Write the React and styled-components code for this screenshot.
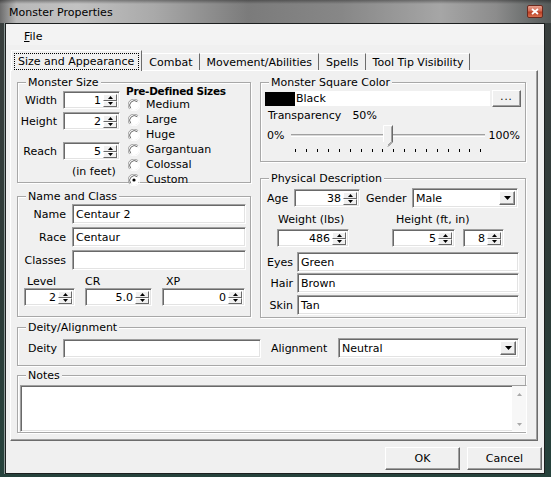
import React from 'react';
import styled, { createGlobalStyle } from 'styled-components';

const Global = createGlobalStyle`
  html, body {
    margin: 0;
    padding: 0;
    background: #2b3d3a;
  }
  body {
    font-family: "DejaVu Sans", Verdana, sans-serif;
    font-size: 11px;
    color: #000;
  }
`;

const Window = styled.div`
  width: 551px;
  height: 477px;
  box-sizing: border-box;
  display: flex;
  flex-direction: column;
  padding: 0 6px 3px 5px;
  background: linear-gradient(to bottom, #3a3f3e 0%, #2c3a37 60%, #26423c 100%);
`;

const TitleBar = styled.div`
  height: 23px;
  margin: 0 -6px 0 -5px;
  display: flex;
  align-items: flex-start;
  background:
    linear-gradient(to bottom, rgba(0,0,0,0.35) 0px, rgba(0,0,0,0) 4px),
    linear-gradient(to right, #6d6d6d 0%, #b9b9b9 3%, #c2c2c2 14%, #a9a9a9 28%, #7b7b7b 45%, #878787 62%, #a6a6a6 80%, #8c8c8c 90%, #555a59 100%);
`;

const TitleText = styled.div`
  padding: 6px 0 0 9px;
  line-height: 13px;
  font-size: 11px;
  color: #000;
`;

const CloseBox = styled.div`
  margin: 5px 8px 0 auto;
  width: 16px;
  height: 13px;
  box-sizing: border-box;
  border-radius: 2px;
  border: 1px solid #6b2a1f;
  background: linear-gradient(to bottom, #e8a08e 0%, #d46a52 45%, #b83c22 55%, #d9704f 100%);
  display: flex;
  align-items: center;
  justify-content: center;
`;

const Body = styled.div`
  flex: 1;
  display: flex;
  flex-direction: column;
  background: #f0f0f0;
  border: 1px solid #1c1f1f;
  box-shadow: -1px 0 0 #8a9694;
`;

const MenuBar = styled.div`
  height: 21px;
  display: flex;
  align-items: center;
  padding: 3px 0 0 18px;
  box-sizing: border-box;
  background: #f3f3f3;
`;

const MenuItem = styled.span`
  line-height: 13px;
  u { text-decoration: underline; }
`;

const TabStrip = styled.div`
  margin-top: 5px;
  height: 20px;
  display: flex;
  align-items: flex-end;
  padding-left: 5px;
  position: relative;
  z-index: 1;
`;

const Tab = styled.div`
  box-sizing: border-box;
  height: ${(p) => (p.$active ? 21 : 17)}px;
  margin-bottom: ${(p) => (p.$active ? -1 : 0)}px;
  padding: ${(p) => (p.$active ? '2px 2px 1px 2px' : '0 6px 0 7px')};
  display: flex;
  align-items: center;
  background: #f0f0f0;
  border-top: 1px solid #fff;
  border-left: ${(p) => (p.$active ? '1px solid #fff' : 'none')};
  border-right: 1px solid #6c6c6c;
  white-space: nowrap;
`;

const FocusRect = styled.div`
  height: 100%;
  box-sizing: border-box;
  padding: 0 4px 0 3px;
  display: flex;
  align-items: center;
  border: 1px dotted #000;
`;

const TabPage = styled.div`
  margin-left: 4px;
  width: 528px;
  height: 371px;
  box-sizing: border-box;
  border: 1px solid;
  border-color: #fff #6c6c6c #6c6c6c #fff;
  box-shadow: inset -1px -1px 0 #a0a0a0;
  padding: 11px 0 0 6px;
`;

const Columns = styled.div`
  display: grid;
  grid-template-columns: 234px 266px;
  column-gap: 9px;
  align-items: start;
`;

const Column = styled.div`
  display: flex;
  flex-direction: column;
  gap: ${(p) => p.$gap}px;
`;

const Group = styled.div`
  position: relative;
  box-sizing: border-box;
  width: ${(p) => p.$w || '100%'};
  height: ${(p) => p.$h}px;
  margin-top: ${(p) => p.$mt || 0}px;
  border: 1px solid #a8a8a8;
  box-shadow: inset 1px 1px 0 #fff, 1px 1px 0 #fff;
`;

const Legend = styled.span`
  position: absolute;
  top: -7px;
  left: 8px;
  padding: 0 2px;
  line-height: 13px;
  background: #f0f0f0;
`;

const Row = styled.div`
  display: flex;
  align-items: ${(p) => (p.$top ? 'flex-start' : 'center')};
  margin-top: ${(p) => p.$mt || 0}px;
  margin-left: ${(p) => p.$ml || 0}px;
  gap: ${(p) => p.$gap || 0}px;
`;

const Cell = styled.div`
  margin-left: ${(p) => p.$ml || 0}px;
`;

const Label = styled.span`
  display: inline-block;
  width: ${(p) => (p.$w ? `${p.$w}px` : 'auto')};
  text-align: ${(p) => (p.$right ? 'right' : 'left')};
  margin-left: ${(p) => p.$ml || 0}px;
  margin-top: ${(p) => p.$mt || 0}px;
  line-height: 13px;
  white-space: nowrap;
`;

const sunken = `
  box-sizing: border-box;
  background: #fff;
  border: 1px solid;
  border-color: #a0a0a0 #fff #fff #a0a0a0;
  box-shadow: inset 1px 1px 0 #696969, inset -1px -1px 0 #e3e3e3;
`;

const TextField = styled.div`
  ${sunken}
  width: ${(p) => p.$w}px;
  height: ${(p) => p.$h || 20}px;
  padding: 0 3px;
  display: flex;
  align-items: center;
  line-height: 13px;
`;

const SpinBox = styled.div`
  ${sunken}
  width: ${(p) => p.$w}px;
  height: 18px;
  display: flex;
  padding: 2px 2px 1px 2px;
`;

const SpinValue = styled.div`
  flex: 1;
  text-align: right;
  padding-right: 2px;
  line-height: 14px;
`;

const SpinButtons = styled.div`
  width: 14px;
  display: flex;
  flex-direction: column;
`;

const SpinBtn = styled.div`
  flex: 1;
  box-sizing: border-box;
  background: #f0f0f0;
  border: 1px solid;
  border-color: #fff #696969 #696969 #fff;
  display: flex;
  align-items: center;
  justify-content: center;
`;

const Combo = styled.div`
  ${sunken}
  width: ${(p) => p.$w}px;
  height: 20px;
  display: flex;
  align-items: stretch;
  padding: 2px;
`;

const ComboValue = styled.div`
  flex: 1;
  display: flex;
  align-items: center;
  padding-left: 1px;
  line-height: 13px;
`;

const ComboBtn = styled.div`
  width: 16px;
  box-sizing: border-box;
  background: #f0f0f0;
  border: 1px solid;
  border-color: #fff #696969 #696969 #fff;
  box-shadow: inset -1px -1px 0 #a0a0a0;
  display: flex;
  align-items: center;
  justify-content: center;
`;

const SizesCol = styled.div`
  display: flex;
  flex-direction: column;
  margin-left: 6px;
`;

const SizesTitle = styled.div`
  font-weight: bold;
  font-size: 10.5px;
  line-height: 12px;
  margin-top: 2px;
  letter-spacing: -0.3px;
`;

const RadioRow = styled.div`
  height: 15px;
  display: flex;
  align-items: center;
  gap: 6px;
  padding-left: 2px;
`;

const FeetNote = styled.div`
  line-height: 13px;
  margin: 5px 0 0 54px;
`;

const Swatch = styled.div`
  width: 30px;
  height: 14px;
  background: #000;
`;

const ColorName = styled.div`
  width: 195px;
  height: 15px;
  background: #fff;
  line-height: 15px;
  padding-left: 1px;
  box-sizing: border-box;
`;

const DotsButton = styled.div`
  margin-left: 2px;
  width: 29px;
  height: 17px;
  box-sizing: border-box;
  background: #f0f0f0;
  border: 1px solid;
  border-color: #fff #696969 #696969 #fff;
  box-shadow: inset -1px -1px 0 #a0a0a0;
  display: flex;
  align-items: center;
  justify-content: center;
  font-size: 10px;
  letter-spacing: 1px;
  line-height: 10px;
  padding-bottom: 3px;
`;

const SliderArea = styled.div`
  display: flex;
  align-items: flex-start;
  margin: 3px 0 0 6px;
  height: 32px;
`;

const SliderTrackBox = styled.div`
  position: relative;
  width: 194px;
  height: 32px;
  margin: 0 3px 0 7px;
`;

const Track = styled.div`
  position: absolute;
  left: 0;
  right: 0;
  top: 9px;
  height: 3px;
  box-sizing: border-box;
  border-top: 1px solid #a0a0a0;
  border-bottom: 1px solid #fff;
  background: #d8d8d8;
`;

const Ticks = styled.div`
  position: absolute;
  left: 4px;
  right: 4px;
  top: 24px;
  display: flex;
  justify-content: space-between;
`;

const Tick = styled.div`
  width: 1px;
  height: 3px;
  background: #000;
`;

const Thumb = styled.svg`
  position: absolute;
  top: 0;
  margin-left: -5px;
`;

const NotesArea = styled.div`
  ${sunken}
  margin: 9px 0 0 2px;
  height: 47px;
  width: 507px;
  display: flex;
  justify-content: flex-end;
`;

const ScrollCol = styled.div`
  width: 14px;
  display: flex;
  flex-direction: column;
  justify-content: space-between;
  align-items: center;
  padding: 7px 0 5px;
  background: #f7f7f7;
`;

const ButtonRow = styled.div`
  display: flex;
  justify-content: flex-end;
  gap: 7px;
  padding: 6px 2px 0 0;
`;

const Button = styled.div`
  width: 75px;
  height: 23px;
  box-sizing: border-box;
  background: #f0f0f0;
  border: 1px solid;
  border-color: #fff #696969 #696969 #fff;
  box-shadow: inset -1px -1px 0 #a0a0a0;
  display: flex;
  align-items: center;
  justify-content: center;
`;

const Arrow = ({ up, color = '#000', w = 5 }) => {
  const h = Math.ceil(w / 2);
  return (
    <svg width={w} height={h} viewBox={`0 0 ${w} ${h}`}>
      {up ? (
        <polygon points={`0,${h} ${w},${h} ${w / 2},0`} fill={color} />
      ) : (
        <polygon points={`0,0 ${w},0 ${w / 2},${h}`} fill={color} />
      )}
    </svg>
  );
};

const Radio = ({ checked }) => (
  <svg width="12" height="12" viewBox="0 0 12 12">
    <circle cx="6" cy="6" r="5" fill="#fff" />
    <path d="M10.2 1.8 A5.9 5.9 0 0 0 1.8 10.2" stroke="#a0a0a0" fill="none" />
    <path d="M9.3 2.7 A4.7 4.7 0 0 0 2.7 9.3" stroke="#696969" fill="none" />
    <path d="M1.8 10.2 A5.9 5.9 0 0 0 10.2 1.8" stroke="#fff" fill="none" />
    {checked && <circle cx="6" cy="6" r="1.6" fill="#000" />}
  </svg>
);

const Spin = ({ w, value }) => (
  <SpinBox $w={w}>
    <SpinValue>{value}</SpinValue>
    <SpinButtons>
      <SpinBtn><Arrow up /></SpinBtn>
      <SpinBtn><Arrow /></SpinBtn>
    </SpinButtons>
  </SpinBox>
);

const Dropdown = ({ w, value }) => (
  <Combo $w={w}>
    <ComboValue>{value}</ComboValue>
    <ComboBtn><Arrow w={7} /></ComboBtn>
  </Combo>
);

const tabs = ['Size and Appearance', 'Combat', 'Movement/Abilities', 'Spells', 'Tool Tip Visibility'];
const sizes = ['Medium', 'Large', 'Huge', 'Gargantuan', 'Colossal', 'Custom'];

export default function App() {
  const transparency = 50;
  return (
    <>
      <Global />
      <Window>
        <TitleBar>
          <TitleText>Monster Properties</TitleText>
          <CloseBox>
            <svg width="8" height="7" viewBox="0 0 8 7">
              <path d="M1 1 L7 6 M7 1 L1 6" stroke="#fff" strokeWidth="1.8" />
            </svg>
          </CloseBox>
        </TitleBar>
        <Body>
          <MenuBar>
            <MenuItem><u>F</u>ile</MenuItem>
          </MenuBar>
          <TabStrip>
            {tabs.map((t, i) => (
              <Tab key={t} $active={i === 0}>
                {i === 0 ? <FocusRect>{t}</FocusRect> : t}
              </Tab>
            ))}
          </TabStrip>
          <TabPage>
            <Columns>
              <Column $gap={13}>
                <Group $h={101}>
                  <Legend>Monster Size</Legend>
                  <Row $top>
                    <div>
                      <Row $mt={8} $gap={6}>
                        <Label $w={39} $right>Width</Label>
                        <Spin w={57} value="1" />
                      </Row>
                      <Row $mt={3} $gap={6}>
                        <Label $w={39} $right>Height</Label>
                        <Spin w={57} value="2" />
                      </Row>
                      <Row $mt={12} $gap={6}>
                        <Label $w={39} $right>Reach</Label>
                        <Spin w={57} value="5" />
                      </Row>
                      <FeetNote>(in feet)</FeetNote>
                    </div>
                    <SizesCol>
                      <SizesTitle>Pre-Defined Sizes</SizesTitle>
                      {sizes.map((s) => (
                        <RadioRow key={s}>
                          <Radio checked={s === 'Custom'} />
                          <span>{s}</span>
                        </RadioRow>
                      ))}
                    </SizesCol>
                  </Row>
                </Group>
                <Group $h={121}>
                  <Legend>Name and Class</Legend>
                  <Row $mt={7} $gap={6}>
                    <Label $w={48} $right>Name</Label>
                    <TextField $w={174}>Centaur 2</TextField>
                  </Row>
                  <Row $mt={3} $gap={6}>
                    <Label $w={48} $right>Race</Label>
                    <TextField $w={174}>Centaur</TextField>
                  </Row>
                  <Row $mt={3} $gap={6}>
                    <Label $w={48} $right>Classes</Label>
                    <TextField $w={174} />
                  </Row>
                  <Row $mt={5} $ml={6} $top>
                    <Cell>
                      <Label $ml={3}>Level</Label>
                      <Spin w={51} value="2" />
                    </Cell>
                    <Cell $ml={10}>
                      <Label>CR</Label>
                      <Spin w={67} value="5.0" />
                    </Cell>
                    <Cell $ml={10}>
                      <Label $ml={4}>XP</Label>
                      <Spin w={83} value="0" />
                    </Cell>
                  </Row>
                </Group>
              </Column>
              <Column $gap={16}>
                <Group $h={80}>
                  <Legend>Monster Square Color</Legend>
                  <Row $mt={7} $ml={4}>
                    <Swatch />
                    <ColorName>Black</ColorName>
                    <DotsButton>...</DotsButton>
                  </Row>
                  <Row $mt={2} $ml={7}>
                    <Label>Transparency</Label>
                    <Label $ml={11}>{transparency}%</Label>
                  </Row>
                  <SliderArea>
                    <Label $mt={4}>0%</Label>
                    <SliderTrackBox>
                      <Track />
                      <Ticks>
                        {Array.from({ length: 18 }).map((_, i) => (
                          <Tick key={i} />
                        ))}
                      </Ticks>
                      <Thumb width="11" height="23" viewBox="0 0 11 23" style={{ left: `${transparency}%` }}>
                        <polygon points="0.5,0.5 9.5,0.5 9.5,17 5,21.5 0.5,17" fill="#f0f0f0" />
                        <polyline points="0.5,17 0.5,0.5 9.5,0.5" stroke="#fff" fill="none" />
                        <polyline points="9.5,0.5 9.5,17 5,21.5" stroke="#696969" fill="none" />
                        <polyline points="8.5,1.5 8.5,16.6 5,20" stroke="#a0a0a0" fill="none" />
                      </Thumb>
                    </SliderTrackBox>
                    <Label $mt={4}>100%</Label>
                  </SliderArea>
                </Group>
                <Group $h={140}>
                  <Legend>Physical Description</Legend>
                  <Row $mt={9} $ml={6}>
                    <Label $w={27}>Age</Label>
                    <Spin w={66} value="38" />
                    <Label $ml={6} $w={46}>Gender</Label>
                    <Dropdown w={106} value="Male" />
                  </Row>
                  <Row $mt={5} $ml={17}>
                    <Label $w={118}>Weight (lbs)</Label>
                    <Label>Height (ft, in)</Label>
                  </Row>
                  <Row $mt={3} $ml={16}>
                    <Spin w={72} value="486" />
                    <Cell $ml={43}>
                      <Spin w={63} value="5" />
                    </Cell>
                    <Cell $ml={8}>
                      <Spin w={41} value="8" />
                    </Cell>
                  </Row>
                  <Row $mt={5} $gap={4}>
                    <Label $w={32} $right>Eyes</Label>
                    <TextField $w={222}>Green</TextField>
                  </Row>
                  <Row $mt={1} $gap={4}>
                    <Label $w={32} $right>Hair</Label>
                    <TextField $w={222}>Brown</TextField>
                  </Row>
                  <Row $mt={2} $gap={4}>
                    <Label $w={32} $right>Skin</Label>
                    <TextField $w={222}>Tan</TextField>
                  </Row>
                </Group>
              </Column>
            </Columns>
            <Group $h={39} $w="509px" $mt={9}>
              <Legend>Deity/Alignment</Legend>
              <Row $mt={10} $ml={10}>
                <Label $w={35}>Deity</Label>
                <TextField $w={198} $h={19} />
                <Label $ml={10} $w={67}>Alignment</Label>
                <Dropdown w={181} value="Neutral" />
              </Row>
            </Group>
            <Group $h={58} $w="509px" $mt={9}>
              <Legend>Notes</Legend>
              <NotesArea>
                <ScrollCol>
                  <Arrow up w={5} color="#a9a9a9" />
                  <Arrow w={5} color="#a9a9a9" />
                </ScrollCol>
              </NotesArea>
            </Group>
          </TabPage>
          <ButtonRow>
            <Button>OK</Button>
            <Button>Cancel</Button>
          </ButtonRow>
        </Body>
      </Window>
    </>
  );
}
